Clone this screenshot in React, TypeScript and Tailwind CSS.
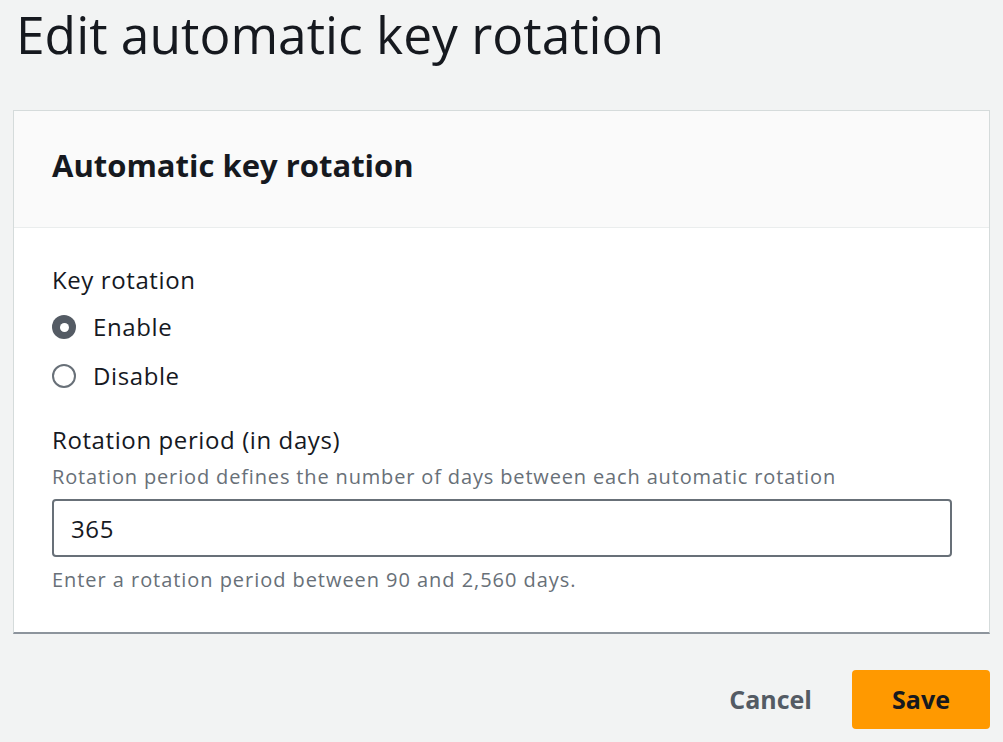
import React, { useState } from "react";

const font = { fontFamily: "'Open Sans', 'Noto Sans', Arial, sans-serif" };

const Radio = ({ checked, label, onClick }: { checked: boolean; label: string; onClick: () => void }) => (
    <button type="button" onClick={onClick} className="flex items-center gap-[17px] h-[36px] text-left">
        {checked ? (
            <span className="w-[24px] h-[24px] rounded-full bg-[#545b64] flex items-center justify-center">
                <span className="w-[9px] h-[9px] rounded-full bg-white" />
            </span>
        ) : (
            <span className="w-[24px] h-[24px] rounded-full border-2 border-[#687078] bg-white" />
        )}
        <span className="text-[24px] text-[#16191f] tracking-[0.6px]">{label}</span>
    </button>
);

export default function App() {
    const [enabled, setEnabled] = useState(true);
    const [days, setDays] = useState("365");

    return (
        <div style={font} className="w-[1003px] h-[742px] bg-[#f2f3f3] overflow-hidden">
            <h1 className="pl-[16px] h-[110px] text-[51.5px] leading-[68px] text-[#16191f]">
                Edit automatic key rotation
            </h1>

            <div className="ml-[13px] w-[977px] bg-white border border-[#d5dbdb] border-b-2 border-b-[#8d949c]">
                <div className="h-[117px] bg-[#fafafa] border-b border-[#eaeded] pl-[38px] pb-[8px] flex items-center">
                    <h2 className="text-[31px] font-bold text-[#16191f]">Automatic key rotation</h2>
                </div>

                <div className="px-[38px] pt-[36px] pb-[38px]">
                    <div className="text-[24px] text-[#16191f] leading-[32px] tracking-[0.6px]">Key rotation</div>
                    <div className="mt-[13px] flex flex-col gap-[13px]">
                        <Radio checked={enabled} label="Enable" onClick={() => setEnabled(true)} />
                        <Radio checked={!enabled} label="Disable" onClick={() => setEnabled(false)} />
                    </div>

                    <div className="mt-[30px] text-[24px] text-[#16191f] leading-[32px] tracking-[0.6px]">
                        Rotation period (in days)
                    </div>
                    <div className="mt-[7px] text-[20px] text-[#687078] leading-[28px] tracking-[0.85px]">
                        Rotation period defines the number of days between each automatic rotation
                    </div>
                    <input
                        value={days}
                        onChange={(e) => setDays(e.target.value)}
                        className="mt-[8px] block w-[900px] h-[58px] px-[17px] border-2 border-[#687078] rounded-[4px] text-[24px] tracking-[0.6px] text-[#16191f] outline-none"
                    />
                    <div className="mt-[9px] text-[20px] text-[#687078] leading-[28px] tracking-[0.95px]">
                        Enter a rotation period between 90 and 2,560 days.
                    </div>
                </div>
            </div>

            <div className="mt-[36px] mr-[13px] flex justify-end items-center gap-[40px]">
                <button type="button" className="text-[25px] font-bold text-[#545b64]">
                    Cancel
                </button>
                <button
                    type="button"
                    className="w-[138px] h-[59px] rounded-[4px] bg-[#ff9900] text-[25px] font-bold text-[#16191f]"
                >
                    Save
                </button>
            </div>
        </div>
    );
}
